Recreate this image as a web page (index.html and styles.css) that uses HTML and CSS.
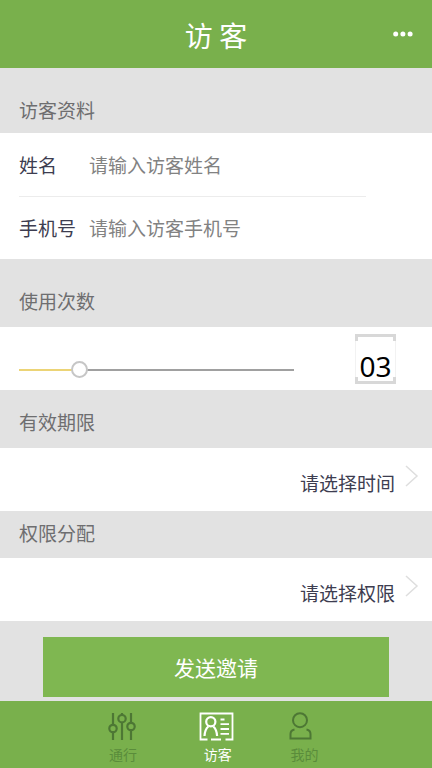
FILE: index.html
```html
<!DOCTYPE html>
<html lang="zh-CN">
<head>
<meta charset="utf-8">
<meta name="viewport" content="width=device-width, initial-scale=1">
<title>访客</title>
<link rel="stylesheet" href="styles.css">
</head>
<body>
<header class="topbar">
  <h1 class="title">访 客</h1>
  <button class="more" type="button" aria-label="更多">
    <svg width="20" height="6" viewBox="0 0 20 6" fill="currentColor"><circle cx="2.7" cy="3" r="2.5"/><circle cx="9.9" cy="3" r="2.5"/><circle cx="17.1" cy="3" r="2.5"/></svg>
  </button>
</header>
<form class="form">
  <h2 class="heading heading-first">访客资料</h2>
  <div class="panel">
    <div class="field">
      <label for="name">姓名</label>
      <input id="name" type="text" placeholder="请输入访客姓名">
    </div>
    <div class="field">
      <label for="phone">手机号</label>
      <input id="phone" type="tel" placeholder="请输入访客手机号">
    </div>
  </div>
  <h2 class="heading heading-count"><label for="count">使用次数</label></h2>
  <div class="panel count">
    <input class="slider" id="count" type="range" min="0" max="15" value="3">
    <output class="number" for="count">03</output>
  </div>
  <h2 class="heading heading-period">有效期限</h2>
  <button class="panel picker" type="button">
    <span>请选择时间</span>
    <svg width="14" height="24" viewBox="0 0 14 24" fill="none" stroke="currentColor" stroke-width="1.5"><path d="M1 2l11 10L1 22"/></svg>
  </button>
  <h2 class="heading heading-rights">权限分配</h2>
  <button class="panel picker" type="button">
    <span>请选择权限</span>
    <svg width="14" height="24" viewBox="0 0 14 24" fill="none" stroke="currentColor" stroke-width="1.5"><path d="M1 2l11 10L1 22"/></svg>
  </button>
  <div class="actions"><button class="submit" type="submit">发送邀请</button></div>
</form>
<nav class="tabs">
  <a class="tab" href="#pass">
    <svg width="30" height="30" viewBox="0 0 30 30" fill="none" stroke="currentColor" stroke-width="2.2"><path d="M5 1v11.500M5 20v8M14 1v2M14 10.500V28M23 1v9.500M23 18.500V28"/><circle cx="5" cy="16.500" r="3.700"/><circle cx="14" cy="6.700" r="3.700"/><circle cx="23" cy="14.500" r="3.700"/></svg>
    <span>通行</span>
  </a>
  <a class="tab tab-current" href="#visitor" aria-current="page">
    <svg width="38" height="30" viewBox="0 0 38 30" fill="none" stroke="currentColor" stroke-width="1.800"><path d="M8.500 27.500H1.500V1.500h32v26h-7M12 27.500h10"/><g stroke-width="2.200"><circle cx="11.800" cy="9.700" r="4.600"/><path d="M5.500 24c.3-5 1.500-7.500 3.800-9.500M14.300 14.500c2.300 2 3.500 4.500 3.800 9.500"/></g><path d="M21.500 7.500h4M21.500 12.200h8.500M21.500 17h8.500M21.500 21.800h8.500"/></svg>
    <span>访客</span>
  </a>
  <a class="tab" href="#mine">
    <svg width="30" height="30" viewBox="0 0 30 30" fill="none" stroke="currentColor" stroke-width="2"><circle cx="11" cy="8.200" r="7"/><path d="M5.500 17.500C3 18 1.500 19.500 1.500 22v4.500h20V22c0-2.500-1.500-4-4-4.500"/></svg>
    <span>我的</span>
  </a>
</nav>
</body>
</html>
```

FILE: styles.css
```css
* {
  box-sizing: border-box;
}

body {
  margin: 0;
  min-height: 100vh;
  display: flex;
  flex-direction: column;
  background: #e2e2e2;
  color: #3d3d50;
  font: 19px/28px "Noto Sans CJK SC", sans-serif;
}

button,
input {
  font: inherit;
  color: inherit;
  border: 0;
  margin: 0;
  padding: 0;
  background: none;
}

svg {
  display: block;
}

.topbar {
  position: relative;
  padding: 15px 0 13px;
  background: #79b04c;
  color: #fff;
}

.title {
  margin: 0;
  font-size: 28px;
  line-height: 40px;
  font-weight: 400;
  text-align: center;
}

.more {
  position: absolute;
  right: 19px;
  top: 24px;
  height: 20px;
}

.form {
  flex: 1;
}

.heading {
  margin: 0;
  padding: 0 19px;
  font-size: 19px;
  font-weight: 400;
  color: #6e6e70;
}

.heading-first {
  padding-top: 28px;
  padding-bottom: 9px;
}

.heading-count {
  padding-top: 28px;
  padding-bottom: 12px;
}

.heading-period {
  padding-top: 18px;
  padding-bottom: 12px;
}

.heading-rights {
  padding-top: 8px;
  padding-bottom: 11px;
}

.panel {
  width: 100%;
  background: #fff;
}

.field {
  display: flex;
  align-items: center;
  height: 63px;
  margin: 0 66px 0 19px;
}

.field + .field {
  border-top: 1px solid #ececec;
}

.field label {
  width: 70px;
}

.field input {
  flex: 1;
  min-width: 0;
  outline: 0;
}

.field input::placeholder {
  color: #828282;
  opacity: 1;
}

.count {
  display: flex;
  justify-content: space-between;
  height: 63px;
  padding: 7px 36px 6px 19px;
}

.slider {
  appearance: none;
  width: 73%;
  height: 18px;
  margin-top: 27px;
}

.slider::-webkit-slider-runnable-track {
  height: 2px;
  background: linear-gradient(to right, #ecd476 22%, #a0a0a0 22%);
}

.slider::-webkit-slider-thumb {
  appearance: none;
  width: 17px;
  height: 17px;
  margin-top: -8px;
  border: 2px solid #c6c6c6;
  border-radius: 50%;
  background: #fff;
}

.number {
  width: 41px;
  height: 50px;
  padding-top: 14px;
  background:
    linear-gradient(#d8d8d8, #d8d8d8) top / 100% 3px no-repeat,
    linear-gradient(#d8d8d8, #d8d8d8) bottom / 100% 3px no-repeat,
    linear-gradient(#d8d8d8, #d8d8d8) left top / 3px 7px no-repeat,
    linear-gradient(#d8d8d8, #d8d8d8) right top / 3px 7px no-repeat,
    linear-gradient(#d8d8d8, #d8d8d8) left bottom / 3px 7px no-repeat,
    linear-gradient(#d8d8d8, #d8d8d8) right bottom / 3px 7px no-repeat,
    linear-gradient(#f2f2f2, #f2f2f2) left / 1px 100% no-repeat,
    linear-gradient(#f2f2f2, #f2f2f2) right / 1px 100% no-repeat;
  color: #000;
  font: 28px/36px "Noto Sans", sans-serif;
  text-align: center;
}

.picker {
  display: flex;
  justify-content: flex-end;
  align-items: flex-start;
  gap: 10px;
  height: 63px;
  padding: 16px 13px 0 19px;
}

.picker span {
  margin-top: 5px;
}

.picker svg {
  color: #dedede;
}

.actions {
  padding: 16px 10% 4px;
}

.submit {
  width: 100%;
  height: 60px;
  background: #7fb751;
  color: #fff;
  font-size: 21px;
}

.tabs {
  display: grid;
  grid-template-columns: 28% 28% 1fr;
  padding: 11px 0 2px 25%;
  background: #79b04c;
}

.tab {
  justify-self: start;
  color: #4d7734;
  font-size: 14px;
  line-height: 24px;
  text-align: center;
  text-decoration: none;
}

.tab span {
  color: #5a8c3b;
}

.tab-current,
.tab-current span {
  color: #fff;
}
```
